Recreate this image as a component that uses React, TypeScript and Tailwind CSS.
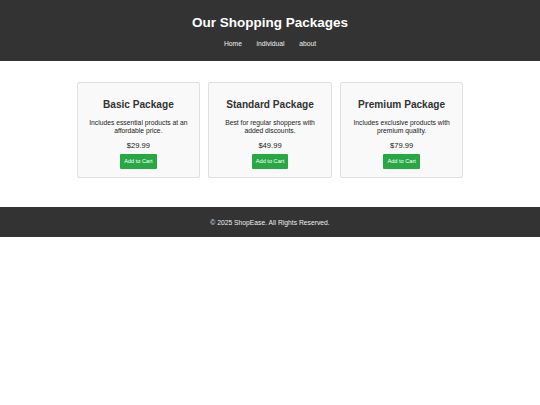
import React from "react";

const packages = [
  { name: "Basic Package", desc: "Includes essential products at an affordable price.", price: "$29.99" },
  { name: "Standard Package", desc: "Best for regular shoppers with added discounts.", price: "$49.99" },
  { name: "Premium Package", desc: "Includes exclusive products with premium quality.", price: "$79.99" },
];

export default function App() {
  return (
    <div className="w-[540px] min-h-[405px] bg-white text-[#333] [font-family:'Liberation_Sans',Arial,sans-serif]">
      <header className="h-[60.5px] bg-[#333] text-white text-center pt-[14.8px]">
        <h1 className="text-[13.5px] leading-[16px] font-bold">Our Shopping Packages</h1>
        <nav className="mt-[9.4px] flex justify-center gap-[14.5px] text-[6.75px] leading-[8px]">
          <a className="text-[#eee]">Home</a>
          <a className="text-[#eee]">individual</a>
          <a className="text-[#eee]">about</a>
        </nav>
      </header>
      <main className="flex justify-center gap-[8.45px] pt-[21.5px]">
        {packages.map((p) => (
          <div
            key={p.name}
            className="w-[123.2px] h-[95.8px] border border-[#e0e0e0] bg-[#f9f9f9] rounded-[2px] text-center px-[8.4px] pt-[16.2px] flex flex-col items-center"
          >
            <h2 className="text-[10.125px] leading-[12px] font-bold text-[#333]">{p.name}</h2>
            <p className="mt-[8.3px] text-[6.75px] leading-[7.8px] text-[#222]">{p.desc}</p>
            <p className="mt-[6.8px] text-[7.6px] leading-[8.7px] text-[#222]">{p.price}</p>
            <button className="mt-[3.6px] bg-[#28a745] text-white text-[5.625px] leading-[6.4px] px-[4.2px] py-[4.2px] rounded-[1px]">
              Add to Cart
            </button>
          </div>
        ))}
      </main>
      <footer className="mt-[29.2px] h-[30px] bg-[#333] text-[#eee] flex items-center justify-center text-[6.75px] leading-[7.8px] pt-[1px]">
        © 2025 ShopEase. All Rights Reserved.
      </footer>
    </div>
  );
}
